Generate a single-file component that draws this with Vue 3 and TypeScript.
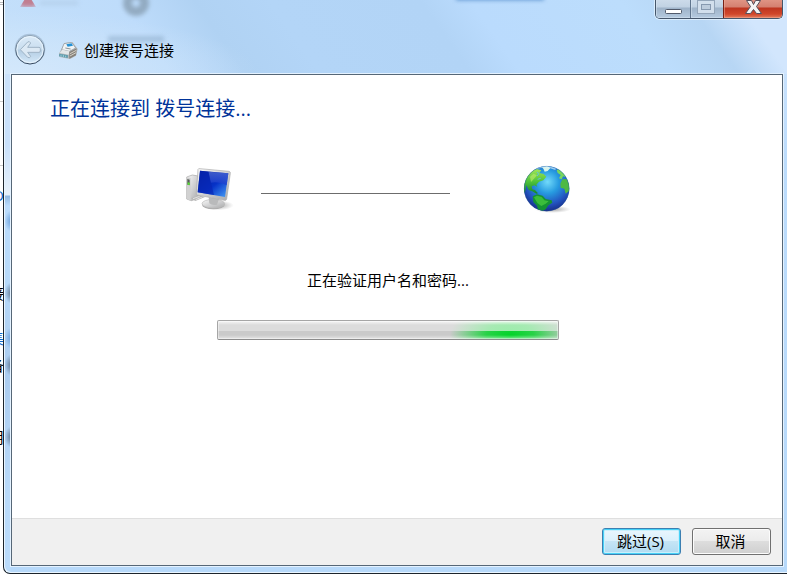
<script setup lang="ts">
import { ref } from 'vue'

const title = '创建拨号连接'
const heading = '正在连接到 拨号连接...'
const status = ref('正在验证用户名和密码...')
const progress = ref(86)

const behind = [
  { text: 'O', top: 185, shadow: 211, tone: 'link' },
  { text: '接', top: 283, shadow: 283, tone: 'plain' },
  { text: '集', top: 328, shadow: 328, tone: 'link' },
  { text: '备', top: 355, shadow: 355, tone: 'plain' },
  { text: '用', top: 427, shadow: 427, tone: 'plain' },
]
</script>

<template>
  <div class="desktop">
    <div class="behind" aria-hidden="true">
      <span
        v-for="item in behind"
        :key="item.top"
        :class="['sliver', item.tone]"
        :style="{ top: item.top + 'px' }"
      >{{ item.text }}</span>
    </div>

    <div class="window">
      <div class="reflections" aria-hidden="true">
        <i class="smudge red"></i>
        <i class="smudge trail"></i>
        <i class="smudge ring"></i>
        <i class="smudge label"></i>
        <i class="smudge blue"></i>
        <i v-for="item in behind" :key="item.top" :class="['bleed', item.tone]" :style="{ top: item.shadow + 'px' }"></i>
      </div>

      <header class="titlebar">
        <button class="back" type="button" disabled aria-label="返回">
          <svg viewBox="12 15 96 96" width="32" height="32">
            <defs>
              <linearGradient id="orb" x1="0" y1="0" x2="0" y2="1">
                <stop offset="0" stop-color="#dcebf8" />
                <stop offset=".48" stop-color="#cadeef" />
                <stop offset=".52" stop-color="#b4cde3" />
                <stop offset="1" stop-color="#d6eafa" />
              </linearGradient>
              <linearGradient id="orbRim" x1="0" y1="0" x2="0" y2="1">
                <stop offset="0" stop-color="#8ea3b6" />
                <stop offset="1" stop-color="#35465c" />
              </linearGradient>
            </defs>
            <circle cx="60" cy="63" r="46" fill="#94aec6" opacity=".6" />
            <circle cx="60" cy="65" r="43" fill="url(#orb)" stroke="url(#orbRim)" stroke-width="3" />
            <circle cx="60" cy="65" r="39" fill="none" stroke="#e8f4fd" stroke-width="3" />
            <path d="M31 65 53 42Q58 38 62 45L53 58H87Q91 58 91 62V69Q91 73 87 73H53L62 85Q59 92 53 88Z" fill="#dce9f4" stroke="#9fb4c6" stroke-width="3" stroke-linejoin="round" />
          </svg>
        </button>
        <svg class="device" viewBox="144 42 60 54" width="20" height="18" aria-hidden="true">
          <path d="M147 77 163 45 188 43 203 63 198 83 180 93 148 87Z" fill="#b4b8bb" />
          <path d="M162 47 185 43 197 60 178 70 155 65Z" fill="#f0f3f4" stroke="#8b9298" stroke-width="2" />
          <path d="M169 49 185 46 189 53 173 56Z" fill="#2491d6" />
          <path d="M157 65 178 70 176 80 149 75Z" fill="#e3e7e9" />
          <path d="M148 77 174 82 173 90 147 85Z" fill="#5b9bad" />
          <path d="M178 72 200 61 198 82 178 92Z" fill="#85817b" />
          <path d="M180 77 199 67M180 84 198 74" stroke="#d6d1c6" stroke-width="3" />
          <path d="M153 80v6M160 81v6M167 83v5" stroke="#a3cdd6" stroke-width="3" />
          <path d="M166 60 182 63" stroke="#8b9499" stroke-width="3" />
        </svg>
        <h1>{{ title }}</h1>
        <div class="controls">
          <button class="control" type="button" aria-label="最小化">
            <svg viewBox="0 0 34 18" width="34" height="18"><rect x="9.5" y="9.5" width="16" height="4" rx="1" fill="#fff" stroke="#515a6b" /></svg>
          </button>
          <button class="control" type="button" disabled aria-label="最大化">
            <svg viewBox="0 0 32 18" width="32" height="18">
              <rect x="6.5" y=".5" width="17" height="13" fill="#d2dfec" stroke="#94a6ba" />
              <rect x="10.5" y="4.5" width="9" height="5" fill="#bdccdc" stroke="#8799af" />
            </svg>
          </button>
          <button class="control close" type="button" aria-label="关闭">
            <svg viewBox="0 0 58 18" width="58" height="18">
              <path d="M22.500.5h5l2 4 2-4h5l-4 6 5 7h-5l-3-4-3 4h-5l5-7z" fill="#f4f4f4" stroke="#55505c" stroke-linejoin="round" />
            </svg>
          </button>
        </div>
      </header>

      <main class="client">
        <section class="body">
          <h2>{{ heading }}</h2>
          <div class="route">
            <svg class="computer" viewBox="48 30 144 144" width="48" height="48" role="img" aria-label="计算机">
              <defs>
                <linearGradient id="screen" x1="0" y1="0" x2="1" y2="1">
                  <stop offset="0" stop-color="#001a91" />
                  <stop offset=".55" stop-color="#0632c8" />
                  <stop offset="1" stop-color="#48a2f8" />
                </linearGradient>
                <linearGradient id="glare" x1="0" y1="0" x2="0" y2="1">
                  <stop offset="0" stop-color="#526ed2" />
                  <stop offset="1" stop-color="#1639cd" />
                </linearGradient>
                <linearGradient id="silver" x1="0" y1="0" x2="1" y2="1">
                  <stop offset="0" stop-color="#fafafa" />
                  <stop offset="1" stop-color="#a9aaac" />
                </linearGradient>
                <radialGradient id="shade">
                  <stop offset="0" stop-color="#555" stop-opacity=".55" />
                  <stop offset="1" stop-color="#777" stop-opacity="0" />
                </radialGradient>
              </defs>
              <ellipse cx="145" cy="151" rx="46" ry="15" fill="url(#shade)" />
              <path d="M50 66 67 60 85 63V130L64 137 50 132Z" fill="url(#silver)" stroke="#a4a4a4" stroke-width="2" />
              <path d="M50 66 62 69V137L50 132Z" fill="#d1d1d1" />
              <path d="M52 72 59 74V91L52 89Z" fill="#555b58" />
              <path d="M53 82 59 83V90L53 89Z" fill="#55e330" />
              <path d="M63 130 87 121 105 126 76 138Z" fill="#b7b7b7" />
              <path d="M69 131 89 124M77 134 97 126" stroke="#f4f4f4" stroke-width="2" />
              <ellipse cx="130" cy="149" rx="34" ry="14" fill="#aaa" />
              <ellipse cx="130" cy="146" rx="34" ry="13" fill="url(#silver)" stroke="#bcbcbc" stroke-width="2" />
              <path d="M116 127 147 132 141 149Q127 153 118 145Z" fill="#b9babb" />
              <path d="M84 43Q85 40 90 41L177 49Q182 50 181 55L170 132Q169 137 163 136L82 120Q78 119 79 114Z" fill="url(#silver)" stroke="#aaa" stroke-width="2" />
              <path d="M90 47 175 55 165 126 83 112Z" fill="url(#screen)" />
              <path d="M115 50 175 55 170 91Q148 78 122 83Z" fill="url(#glare)" opacity=".75" />
              <path d="M90 47 115 50 132 120 83 112Z" fill="#0827b4" opacity=".65" />
            </svg>
            <span class="wire"></span>
            <svg class="globe" viewBox="39 30 144 144" width="48" height="48" role="img" aria-label="Internet">
              <defs>
                <radialGradient id="ocean" cx=".52" cy=".35" r=".66">
                  <stop offset="0" stop-color="#72dafa" />
                  <stop offset=".38" stop-color="#279be0" />
                  <stop offset=".74" stop-color="#2354c0" />
                  <stop offset="1" stop-color="#172a85" />
                </radialGradient>
                <linearGradient id="land" x1="0" y1="0" x2="0" y2="1">
                  <stop offset="0" stop-color="#a1e65a" />
                  <stop offset=".5" stop-color="#51c43a" />
                  <stop offset="1" stop-color="#128530" />
                </linearGradient>
                <clipPath id="sphere"><circle cx="110" cy="101" r="68" /></clipPath>
              </defs>
              <ellipse cx="128" cy="163" rx="54" ry="11" fill="url(#shade)" />
              <circle cx="110" cy="101" r="68" fill="url(#ocean)" />
              <g clip-path="url(#sphere)">
                <path d="M40 92 47 67 63 49 80 42 94 46 88 54 101 57 109 65 100 76 87 80 79 89 82 95 73 91 65 94 67 103 75 105 84 115 79 116 67 109 56 105 49 91 45 112 38 115Z" fill="url(#land)" />
                <path d="M68 124 81 118 98 122 107 132 125 136 127 143 115 151 107 163 93 170 84 164 81 152 70 141Z" fill="#159334" />
                <path d="M72 127 81 122 95 126 103 136 116 139 107 146 94 153 82 144Z" fill="#3bbd3b" />
                <path d="M96 36 112 33 121 39 113 48 104 50 101 43Z" fill="#d9f5ec" />
                <path d="M140 45 147 42 165 57 170 67 159 64 155 73 147 70 152 60 143 54Z" fill="#79d85c" />
                <path d="M157 73 170 72 179 89 178 107 167 116 163 101 152 98 151 86Z" fill="#4eb944" />
                <path d="M60 65 71 56 81 61 72 71 63 81Z" fill="#c0ed69" opacity=".6" />
                <path d="M81 51 86 57 81 63M83 73 92 70" fill="none" stroke="#5bc0e7" stroke-width="3" />
                <path d="M80 40Q108 29 137 43" fill="none" stroke="#d9f5ff" stroke-width="5" opacity=".65" />
              </g>
              <circle cx="110" cy="101" r="67" fill="none" stroke="#205a9c" stroke-width="2" opacity=".5" />
            </svg>
          </div>
          <p id="status" class="status">{{ status }}</p>
          <div class="progress" role="progressbar" aria-labelledby="status">
            <span class="glow" :style="{ left: progress + '%' }"></span>
            <span class="gloss"></span>
          </div>
        </section>
        <footer class="actions">
          <button class="action primary" type="button">跳过(S)</button>
          <button class="action" type="button">取消</button>
        </footer>
      </main>
    </div>
  </div>
</template>

<style>
body {
  margin: 0;
  background: #fff;
}
</style>

<style scoped>
* {
  box-sizing: border-box;
}

.desktop {
  position: relative;
  display: flex;
  min-height: 100vh;
  padding: 0 0 1px 3px;
  overflow: hidden;
  font-family: "Open Sans", "Noto Sans CJK SC", sans-serif;
  font-size: 15px;
  line-height: 20px;
  color: #000;
}

.behind {
  position: absolute;
  top: 0;
  left: 0;
  width: 4px;
  height: 100%;
  overflow: hidden;
  background:
    linear-gradient(#bbb, #bbb) 0 2px / 4px 1px no-repeat,
    linear-gradient(#bbb, #bbb) 0 4px / 4px 1px no-repeat,
    linear-gradient(#ccc, #ccc) 0 101px / 4px 1px no-repeat,
    linear-gradient(#ccc, #ccc) 0 165px / 4px 1px no-repeat;
}

.sliver {
  position: absolute;
  right: 0;
}

.sliver.link {
  color: #0d67c8;
}

.window {
  position: relative;
  display: flex;
  flex: 1;
  flex-direction: column;
  min-width: 0;
  border: solid #1c242c;
  border-width: 0 0 1px 1px;
  border-radius: 0 0 0 7px;
  background:
    linear-gradient(#cbe2fb, #c8e0fb 70px, #e5f0fb 118px, #e5f0fb 121px, #8fb8e2 122px, #bbdcfc 132px, #b8dafa 200px, #abccef 300px, #b9dafa 420px, #bbdcfc) 0 74px / 7px 100% no-repeat,
    radial-gradient(ellipse at 0 100%, #d4e8fb, #cfe5fb00 60%) 0 0 / 300px 74px no-repeat,
    linear-gradient(55deg, #c5e0fa 0, #bedcfb 20%, #b0d2f3 29%, #b3d5f7 38%, #b2d4f6 56%, #badbfd 62%, #bcddfc 80%, #b7d6f4 88%, #d2e6fd 94%, #d2e6fd) 0 0 / 100% 74px no-repeat,
    linear-gradient(#d2e6fd, #bcdcfc 160px, #b7d9fa);
  box-shadow: inset 1px -1px #e9f5ff;
}

.reflections {
  position: absolute;
  inset: 0;
  overflow: hidden;
  pointer-events: none;
}

.smudge {
  position: absolute;
  filter: blur(2px);
}

.red {
  top: -6px;
  left: 16px;
  width: 16px;
  height: 13px;
  background: #c07e91;
  clip-path: polygon(50% 0, 100% 100%, 0 100%);
}

.trail {
  top: 1px;
  left: 36px;
  width: 38px;
  height: 4px;
  background: #a9c3dd;
  opacity: 0.5;
}

.ring {
  top: -10px;
  left: 119px;
  width: 26px;
  height: 26px;
  border: 9px solid #8197aa;
  border-radius: 50%;
  opacity: 0.7;
}

.label {
  top: 36px;
  left: 104px;
  width: 56px;
  height: 6px;
  background: #87a6c4;
  opacity: 0.5;
}

.blue {
  top: -5px;
  left: 452px;
  width: 88px;
  height: 5px;
  background: #5790cd;
}

.bleed {
  position: absolute;
  left: 1px;
  width: 6px;
  height: 20px;
  background: radial-gradient(ellipse at 100% 50%, #627b96 0, #627b9600 75%);
}

.bleed.link {
  background: radial-gradient(ellipse at 100% 50%, #6aa0dc 0, #6aa0dc00 75%);
}

.titlebar {
  position: relative;
  display: flex;
  align-items: flex-start;
  height: 74px;
  padding: 0 4px 0 10px;
}

.back {
  display: block;
  width: 32px;
  height: 32px;
  margin-top: 33px;
  padding: 0;
  border: 0;
  background: none;
}

svg {
  display: block;
  flex: none;
}

.device {
  margin: 42px 6px 0 12px;
}

h1,
h2,
p {
  margin: 0;
  font-weight: 400;
}

h1 {
  margin-top: 40px;
  font-size: 15px;
  line-height: 20px;
}

.controls {
  display: flex;
  height: 19px;
  margin-left: auto;
  overflow: hidden;
  border: 1px solid #45566b;
  border-top: 0;
  border-radius: 0 0 5px 5px;
  box-shadow: 0 0 0 1px #e4f2ffcc;
}

.control {
  padding: 0;
  border: 0;
  border-right: 1px solid #60758d;
  background: linear-gradient(#ccdbea, #c1d2e3 7px, #9eb3c9 8px, #b5cadf);
  box-shadow: inset 1px -1px #d9e7f480;
}

.close {
  border: 0;
  border-left: 1px solid #782015;
  margin-left: -1px;
  background: linear-gradient(#df9484, #d58070 7px, #bd3520 8px, #d0462a 14px, #e37c5c);
  box-shadow: inset 1px -1px #f2b29d80;
}

.client {
  position: relative;
  display: flex;
  flex: 1;
  flex-direction: column;
  margin: 0 4px 7px 7px;
  border: 1px solid #566777;
  background: #fff;
  box-shadow: 0 0 0 1px #e4f2ff;
}

.body {
  display: flex;
  flex: 1;
  flex-direction: column;
  align-items: center;
  padding: 19px 18px 32px 0;
}

h2 {
  align-self: flex-start;
  margin-left: 38px;
  font-size: 20px;
  line-height: 30px;
  color: #003399;
}

.route {
  display: flex;
  align-items: center;
  margin: 41px 19px 0 0;
}

.wire {
  width: 189px;
  height: 1px;
  margin: 8px 73px 0 27px;
  background: #6c6c6c;
}

.status {
  margin-top: 57px;
}

.progress {
  position: relative;
  width: 342px;
  height: 20px;
  margin-top: 30px;
  overflow: hidden;
  border: 1px solid #a6a6a6;
  border-bottom-color: #8c8c8c;
  border-radius: 2px;
  background: linear-gradient(#a8a8a8 10px, #cacaca 10px);
}

.glow {
  position: absolute;
  top: 0;
  width: 120px;
  height: 18px;
  margin-left: -60px;
  background: radial-gradient(ellipse 60px 36px at 50% 85%, #00d427, #00d427cc 40%, #00d42700);
}

.gloss {
  position: absolute;
  inset: 0;
  background: linear-gradient(#ffffffe6, #ffffff99 4px, #ffffff99 10px, #ffffff00 10px, #ffffff00 14px, #ffffff80);
  box-shadow: inset 0 0 0 1px #ffffff66;
}

.actions {
  display: flex;
  justify-content: flex-end;
  gap: 11px;
  padding: 9px 11px 10px;
  border-top: 1px solid #dfdfdf;
  background: #f0f0f0;
}

.action {
  width: 79px;
  height: 27px;
  padding: 0 2px 2px 0;
  border: 1px solid #707070;
  border-radius: 3px;
  background: linear-gradient(#f3f3f3, #ebebeb 50%, #dddddd 50%, #cfcfcf);
  box-shadow: inset 0 0 0 1px #fcfcfc;
  font: inherit;
  color: #000;
}

.primary {
  border-color: #3c7fb1;
  background: linear-gradient(#eaf6fd, #d9f0fc 50%, #c5e5f6 50%, #b0daf1);
  box-shadow: inset 0 0 0 1px #46d1f7, inset 0 0 0 2px #c8effc;
}
</style>
